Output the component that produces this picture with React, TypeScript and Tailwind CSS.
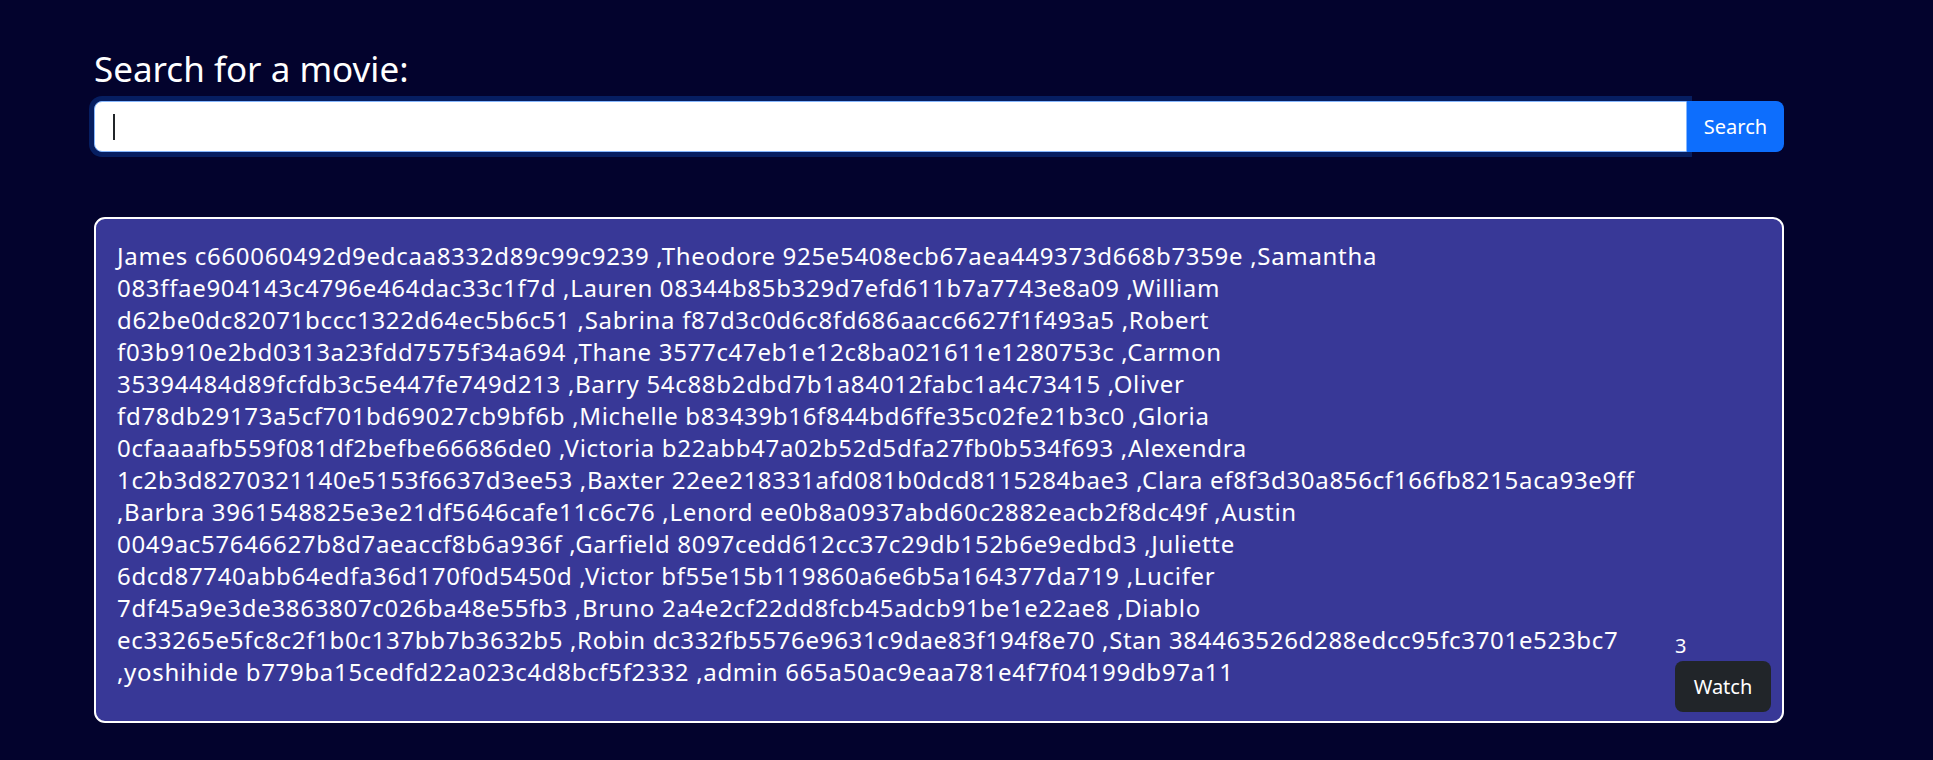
import React from "react";

const lines = [
  "James c660060492d9edcaa8332d89c99c9239 ,Theodore 925e5408ecb67aea449373d668b7359e ,Samantha",
  "083ffae904143c4796e464dac33c1f7d ,Lauren 08344b85b329d7efd611b7a7743e8a09 ,William",
  "d62be0dc82071bccc1322d64ec5b6c51 ,Sabrina f87d3c0d6c8fd686aacc6627f1f493a5 ,Robert",
  "f03b910e2bd0313a23fdd7575f34a694 ,Thane 3577c47eb1e12c8ba021611e1280753c ,Carmon",
  "35394484d89fcfdb3c5e447fe749d213 ,Barry 54c88b2dbd7b1a84012fabc1a4c73415 ,Oliver",
  "fd78db29173a5cf701bd69027cb9bf6b ,Michelle b83439b16f844bd6ffe35c02fe21b3c0 ,Gloria",
  "0cfaaaafb559f081df2befbe66686de0 ,Victoria b22abb47a02b52d5dfa27fb0b534f693 ,Alexendra",
  "1c2b3d8270321140e5153f6637d3ee53 ,Baxter 22ee218331afd081b0dcd8115284bae3 ,Clara ef8f3d30a856cf166fb8215aca93e9ff",
  ",Barbra 3961548825e3e21df5646cafe11c6c76 ,Lenord ee0b8a0937abd60c2882eacb2f8dc49f ,Austin",
  "0049ac57646627b8d7aeaccf8b6a936f ,Garfield 8097cedd612cc37c29db152b6e9edbd3 ,Juliette",
  "6dcd87740abb64edfa36d170f0d5450d ,Victor bf55e15b119860a6e6b5a164377da719 ,Lucifer",
  "7df45a9e3de3863807c026ba48e55fb3 ,Bruno 2a4e2cf22dd8fcb45adcb91be1e22ae8 ,Diablo",
  "ec33265e5fc8c2f1b0c137bb7b3632b5 ,Robin dc332fb5576e9631c9dae83f194f8e70 ,Stan 384463526d288edcc95fc3701e523bc7",
  ",yoshihide b779ba15cedfd22a023c4d8bcf5f2332 ,admin 665a50ac9eaa781e4f7f04199db97a11",
];

export default function App() {
  return (
    <div className="min-h-[760px] w-full bg-[#03032d] font-['Noto_Sans',sans-serif] text-white">
      <div className="pl-[94px] pr-[149px] pt-[48px]">
        <h3 className="text-[35px] leading-[42px] font-normal mb-[11px]">Search for a movie:</h3>
        <div className="flex h-[51px]">
          <div className="flex-1 flex items-center bg-white border border-[#86b7fe] rounded-l-[8px] shadow-[0_0_0_5px_#061e61] pl-[18px]">
            <span className="block w-[1.5px] h-[26px] bg-[#212529]" />
          </div>
          <button className="relative w-[97px] h-[51px] bg-[#0d6efd] rounded-r-[8px] text-[20px] text-white leading-[30px]">
            Search
          </button>
        </div>
        <div className="mt-[65px] flex bg-[#383897] border-2 border-white rounded-[11px] pl-[21px] pr-[11px] pt-[21px] pb-[9px]">
          <div className="flex-1 pb-[24px] text-[24px] leading-[32px] tracking-[0.68px]">
            {lines.map((l, i) => (
              <div key={i} className="whitespace-nowrap">{l}</div>
            ))}
          </div>
          <div className="flex flex-col justify-end items-start w-[96px]">
            <div className="text-[20px] leading-[31px]">3</div>
            <button className="w-[96px] h-[51px] bg-[#212529] rounded-[8px] text-[20px] text-white leading-[30px]">
              Watch
            </button>
          </div>
        </div>
      </div>
    </div>
  );
}
